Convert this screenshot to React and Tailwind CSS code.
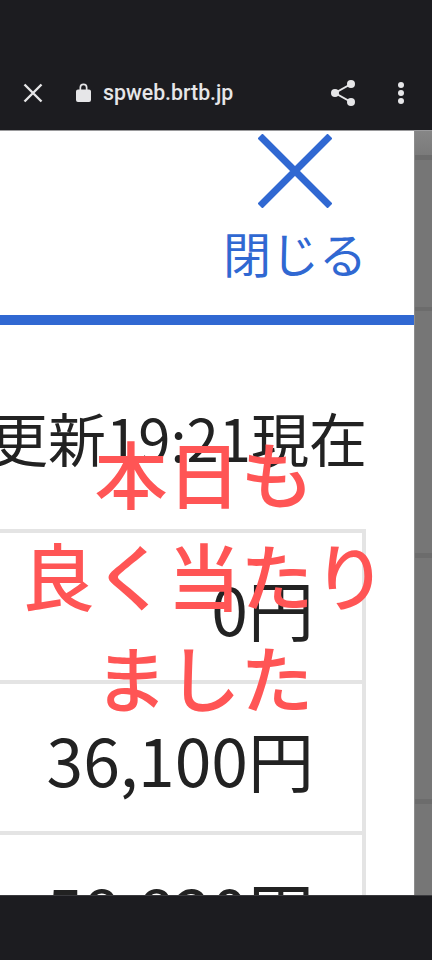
import React from 'react';

const jp = { fontFamily: '"Noto Sans CJK JP", sans-serif' };

const rows = ['0円', '36,100円', '58,820円'];

const TopBar = () => (
  <div className="h-[131px] shrink-0 bg-[#1c1c20] border-b border-[#9a9a9c] flex items-end pb-[25px] text-[#e6e6e8]">
    <svg width="24" height="24" viewBox="0 0 24 24" className="ml-[21px]" fill="none" stroke="currentColor" strokeWidth="2.4">
      <path d="M3.5 3.5 20.5 20.5M20.5 3.5 3.5 20.5" />
    </svg>
    <svg width="15" height="19" viewBox="0 0 15 19" className="ml-[31px] mb-[3px]" fill="currentColor">
      <path d="M2 6.5h1.5V4.5a4 4 0 0 1 8 0v2H13a2 2 0 0 1 2 2V17a2 2 0 0 1-2 2H2a2 2 0 0 1-2-2V8.500a2 2 0 0 1 2-2Zm3.2 0h4.600V4.500a2.300 2.300 0 0 0-4.600 0v2Z" />
    </svg>
    <span className="ml-[12px] text-[21.3px] leading-[24px] font-medium" style={{ fontFamily: 'Roboto, sans-serif' }}>spweb.brtb.jp</span>
    <svg width="26" height="28" viewBox="0 0 26 28" className="ml-auto mb-[-2px]" fill="currentColor" stroke="currentColor">
      <circle cx="21" cy="5" r="4" strokeWidth="0" />
      <circle cx="5" cy="14" r="4" strokeWidth="0" />
      <circle cx="21" cy="23" r="4" strokeWidth="0" />
      <path d="M21 5 5 14l16 9" fill="none" strokeWidth="2" />
    </svg>
    <svg width="8" height="24" viewBox="0 0 8 24" className="ml-[41px] mr-[27px]" fill="currentColor">
      <circle cx="4" cy="4" r="3" />
      <circle cx="4" cy="12" r="3" />
      <circle cx="4" cy="20" r="3" />
    </svg>
  </div>
);

const Scrollbar = () => (
  <div className="w-[18px] shrink-0 bg-[#767676] border-l border-[#8c8c8c] flex flex-col">
    <div className="h-[24px] bg-gradient-to-b from-[#868686] to-[#7a7a7a] shrink-0" />
    <div className="h-[5px] bg-[#6c6c6c] shrink-0" />
    <div className="h-[147px] shrink-0" />
    <div className="h-[4px] bg-[#6c6c6c] shrink-0" />
    <div className="h-[242px] shrink-0" />
    <div className="h-[5px] bg-[#6c6c6c] shrink-0" />
    <div className="h-[241px] shrink-0" />
    <div className="h-[5px] bg-[#6c6c6c] shrink-0" />
  </div>
);

export default function App() {
  return (
    <div className="relative w-[432px] h-[960px] flex flex-col overflow-hidden bg-white" style={jp}>
      <TopBar />
      <div className="flex-1 flex min-h-0">
        <div className="flex-1 min-w-0 overflow-hidden flex flex-col">
          <div className="h-[194px] shrink-0 border-b-[10px] border-[#3068d2] flex flex-col items-end pr-[52px]">
            <svg width="74" height="74" viewBox="0 0 74 74" className="mt-[3px] mr-[30px]" fill="none" stroke="#3068d2" strokeWidth="7">
              <path d="M2 2 72 72M72 2 2 72" />
            </svg>
            <span className="text-[48px] leading-[48px] mt-[20px] mr-[-5px] text-[#3068d2]">閉じる</span>
          </div>
          <div className="h-[204px] shrink-0 flex justify-end items-start pr-[47px] pt-[82px] text-[#222222]">
            <span className="text-[58px] leading-[60px] whitespace-nowrap">更新19:21現在</span>
          </div>
          <div className="mr-[48px] border-[4px] border-l-0 border-b-0 border-[#e4e4e4] flex-1 flex flex-col">
            {rows.map((r) => (
              <div key={r} className="h-[151px] shrink-0 border-b-[4px] border-[#e4e4e4] flex justify-end items-center pr-[48px] text-[#222222]">
                <span className="text-[66px] leading-[76px] whitespace-nowrap">{r}</span>
              </div>
            ))}
          </div>
        </div>
        <Scrollbar />
      </div>
      <div className="h-[65px] shrink-0 bg-[#1c1c20] border-t border-[#3a3a3e]" />
      <div className="absolute left-0 top-[420px] w-[408px] text-center text-[73px] leading-[102px] font-medium text-[#ff5555]">
        <p>本日も</p>
        <p className="whitespace-nowrap">良く当たり</p>
        <p>ました</p>
      </div>
    </div>
  );
}
